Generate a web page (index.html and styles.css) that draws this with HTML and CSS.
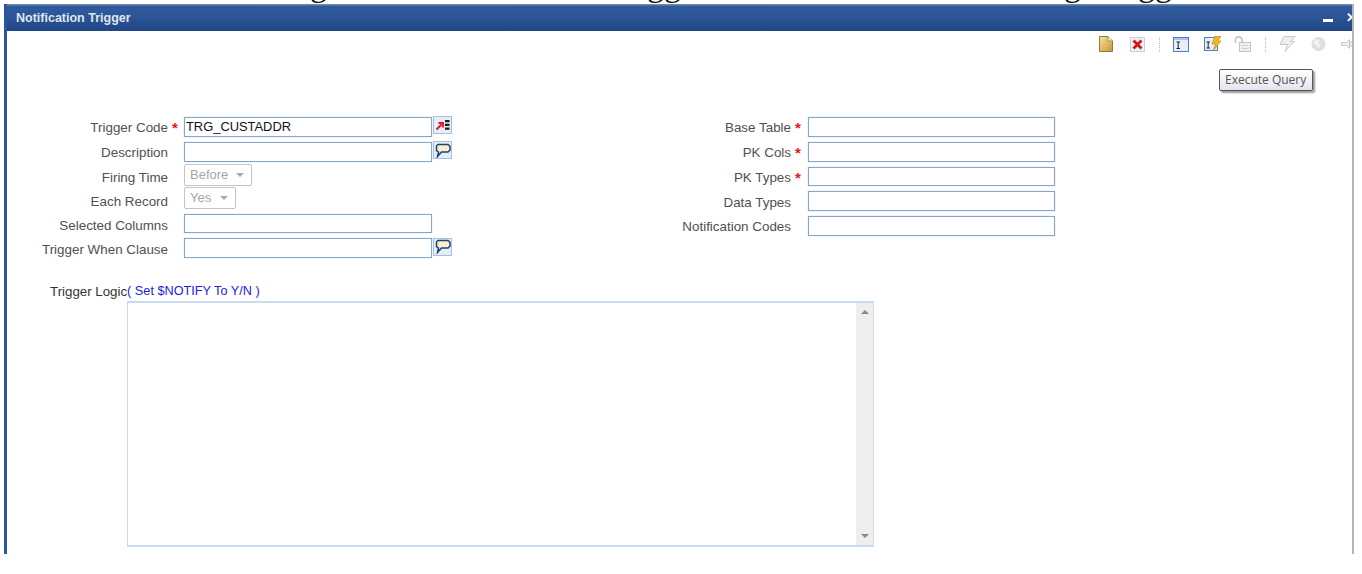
FILE: index.html
```html
<!DOCTYPE html>
<html lang="en">
<head>
<meta charset="utf-8">
<title>Notification Trigger</title>
<link rel="stylesheet" href="styles.css">
</head>
<body>
<div class="cutoff"><span class="g1">g</span><span class="g2">gg</span><span class="g3">g</span><span class="g4">gg</span></div>
<div class="window">
  <header class="titlebar">
    <h1 class="title">Notification Trigger</h1>
    <div class="winbtns"><span class="minimize"></span><span class="close">✕</span></div>
  </header>
  <div class="toolbar">
    <svg width="14" height="16" viewBox="0 0 14 16"><defs><linearGradient id="dg" x1="0" y1="0" x2="1" y2="1"><stop offset="0" stop-color="#f7e49a"/><stop offset="1" stop-color="#c9962e"/></linearGradient></defs><path d="M.5.5H9L13.5 5v10.500H.5z" fill="url(#dg)" stroke="#8f7a45"/><path d="M9 .5V5h4.500" fill="#fff6cf" stroke="#a98f50"/></svg>
    <svg width="15" height="15" viewBox="0 0 15 15"><rect x=".5" y=".5" width="14" height="14" fill="#eef2f8" stroke="#c6d0de"/><path d="M3.500 3.500l8 8M11.500 3.500l-8 8" stroke="#d3141c" stroke-width="2.800"/></svg>
    <span class="sep"></span>
    <svg width="16" height="15" viewBox="0 0 16 15"><rect x=".5" y=".5" width="15" height="14" fill="#e6eef9" stroke="#4d80bd"/><rect x="1" y="1" width="14" height="2" fill="#a9c6e8"/><path d="M3.500 5H7M3.500 11.500H7M5.200 5v6.500" stroke="#222" fill="none"/></svg>
    <svg width="18" height="16" viewBox="0 0 18 16"><rect x=".5" y="1.500" width="13" height="13" fill="#e6eef9" stroke="#4d80bd"/><path d="M2.500 6H6M2.500 12H6M4.200 6v6" stroke="#222" fill="none"/><path d="M11 0h6l-3 5h3l-8 10 2.500-7H8z" fill="#f4b71f" stroke="#b9820c" stroke-width=".6"/></svg>
    <svg width="18" height="16" viewBox="0 0 18 16"><path d="M1.500 7V4a3.200 3.200 0 0 1 6.400 0v2" fill="none" stroke="#c3c7cc" stroke-width="1.700"/><rect x="5.500" y="6.500" width="11" height="9" fill="#eef0f2" stroke="#c0c4c9"/><path d="M7.500 9.500h7M7.500 12.500h7" stroke="#ccd0d4"/></svg>
    <span class="sep"></span>
    <svg width="17" height="16" viewBox="0 0 17 16"><path d="M5 .5h11.500l-5 5h4L6 15.500l2.500-7H1z" fill="#eceeef" stroke="#c8cbce"/></svg>
    <svg width="15" height="16" viewBox="0 0 15 16"><circle cx="7.500" cy="8" r="7" fill="#dcdfe1"/><path d="M4 3l5 1-2 3 3 2-3 4-2-4-3-1z" fill="#f2f3f4"/></svg>
    <svg width="14" height="16" viewBox="0 0 14 16"><path d="M.5 6.500h5l3-3v9l-3-3h-5zM9 6h5v4H9z" fill="#eceeef" stroke="#c8cbce"/></svg>
  </div>
  <div class="tooltip">Execute Query</div>
  <form class="form">
    <div class="col col-left">
      <div class="row"><label class="lbl">Trigger Code</label><span class="req">*</span><div class="input val">TRG_CUSTADDR</div>
        <button type="button" class="iconbtn"><svg width="15" height="13" viewBox="0 0 15 13"><path d="M1.500 10.500L6.500 5.500M3.500 4H8v4.500" fill="none" stroke="#e0101c" stroke-width="1.800"/><path d="M10 1h4.500v2.200H10zM10 4.800h4.500V7H10zM10 8.600h4.500v2.200H10z" fill="#1b1b1b"/></svg></button></div>
      <div class="row"><label class="lbl">Description</label><span class="req"></span><div class="input"></div>
        <button type="button" class="iconbtn"><svg width="16" height="15" viewBox="0 0 16 15"><path d="M3 1.500h10L15 3.500v3.500L13 9H6.500L2.500 13.500 3.500 9 1.500 7.500V3z" fill="#fdf0c4" stroke="#1d3f86" stroke-width="1.500"/></svg></button></div>
      <div class="row row-sel"><label class="lbl lbl-sel">Firing Time</label><span class="req"></span><div class="select sel-wide"><span>Before</span><i class="caret"></i></div></div>
      <div class="row row-sel2"><label class="lbl lbl-sel2">Each Record</label><span class="req"></span><div class="select sel-narrow"><span>Yes</span><i class="caret"></i></div></div>
      <div class="row row-after"><label class="lbl lbl-low">Selected Columns</label><span class="req"></span><div class="input"></div></div>
      <div class="row"><label class="lbl">Trigger When Clause</label><span class="req"></span><div class="input"></div>
        <button type="button" class="iconbtn"><svg width="16" height="15" viewBox="0 0 16 15"><path d="M3 1.500h10L15 3.500v3.500L13 9H6.500L2.500 13.500 3.500 9 1.500 7.500V3z" fill="#fdf0c4" stroke="#1d3f86" stroke-width="1.500"/></svg></button></div>
    </div>
    <div class="col col-right">
      <div class="row"><label class="lbl">Base Table</label><span class="req">*</span><div class="input"></div></div>
      <div class="row"><label class="lbl">PK Cols</label><span class="req">*</span><div class="input"></div></div>
      <div class="row"><label class="lbl">PK Types</label><span class="req">*</span><div class="input"></div></div>
      <div class="row"><label class="lbl">Data Types</label><span class="req"></span><div class="input"></div></div>
      <div class="row"><label class="lbl">Notification Codes</label><span class="req"></span><div class="input"></div></div>
    </div>
  </form>
  <p class="logic-label"><span class="logic-name">Trigger Logic</span><span class="logic-hint">( Set $NOTIFY To Y/N )</span></p>
  <div class="textarea">
    <div class="scrollbar"><i class="arrow-up"></i><i class="arrow-down"></i></div>
  </div>
</div>
</body>
</html>
```
FILE: styles.css
```css
* { box-sizing: border-box; }
html, body { margin: 0; padding: 0; background: #fff; overflow: hidden; }
body { width: 1362px; height: 574px; font-family: "Liberation Sans", Arial, sans-serif; }

.cutoff { display: flex; height: 4px; overflow: hidden; font-family: "Liberation Serif", serif; font-size: 34px; line-height: 34px; color: #111; }
.cutoff span { display: block; margin-top: -32px; white-space: nowrap; }
.g1 { margin-left: 310px; }
.g2 { margin-left: 320px; }
.g3 { margin-left: 383px; }
.g4 { margin-left: 57px; }

.window { position: relative; margin-left: 4px; width: 1350px; height: 550px; border-left: 3px solid #2c5796; border-right: 2px solid #b4b4b4; overflow: hidden; }

.titlebar { display: flex; align-items: center; justify-content: space-between; height: 27px; background: linear-gradient(#6f88ab 0, #6f88ab 1px, #305c9f 2px, #2b5494 14px, #1f4585 100%); padding-left: 9px; }
.title { margin: 0; font-size: 12.500px; font-weight: bold; color: #dfe6f1; }
.winbtns { display: flex; align-items: center; width: 29px; gap: 13px; height: 100%; overflow: hidden; }
.minimize { display: block; flex: none; width: 10px; height: 3px; margin-top: 6px; background: #fff; }
.close { flex: none; font-size: 13px; font-weight: bold; color: #fff; }

.toolbar { display: grid; grid-template-columns: 31px 29px 14px 31px 30px 31px 14px 32px 30px 11px; justify-content: end; align-items: center; height: 24px; padding-top: 2px; overflow: hidden; }
.toolbar svg { display: block; }
.sep { display: block; width: 1px; height: 15px; border-left: 1px dotted #b9b9b9; }

.tooltip { position: absolute; left: 1212px; top: 65px; width: 94px; height: 22px; padding-left: 5px; border: 1px solid #555; border-radius: 2px; background: linear-gradient(#fff, #e3e4ef); box-shadow: 2px 2px 2px #999; font-family: "Open Sans", sans-serif; font-size: 12px; line-height: 19px; color: #555; white-space: nowrap; }

.form { display: flex; margin-top: 62px; padding-left: 9px; }
.col { display: flex; flex-direction: column; gap: 5px; }
.col-left { width: 632px; }
.row { display: flex; align-items: center; height: 19.750px; font-size: 13.400px; color: #505050; }
.row-sel { height: 22px; margin-top: -3px; }
.row-sel2 { height: 22px; margin-top: -4px; }
.row-after { margin-top: 0; }
.lbl { width: 152px; padding-top: 2px; text-align: right; white-space: nowrap; }
.lbl-sel { padding-top: 5px; }
.lbl-sel2 { padding-top: 7px; }
.lbl-low { padding-top: 4px; }
.req { width: 16px; padding: 3px 0 0 4px; font-size: 15px; line-height: 14px; font-weight: bold; color: #e8141c; }
.col-right .lbl { width: 143px; }
.col-right .req { width: 17px; }
.col-right .input { width: 247px; }

.input { width: 248px; height: 100%; padding: 0 1px; border: 1px solid #86a5ca; box-shadow: 0 0 1px #a9c0dc; background: #fff; font-size: 12.900px; line-height: 17px; color: #111; }
.val { white-space: nowrap; }
.iconbtn { display: flex; align-items: center; justify-content: center; width: 19px; height: 18px; margin: -3px 0 0 1px; padding: 0; border: 1px solid #a9c0dc; background: #e6edf7; }
.iconbtn svg { display: block; flex: none; }

.select { display: flex; align-items: center; justify-content: space-between; height: 100%; padding: 0 7px 0 5px; border: 1px solid #c4c4c4; border-radius: 2px; background: #fff; color: #a6a6a6; font-size: 13px; }
.sel-wide { width: 68px; }
.sel-narrow { width: 52px; }
.caret { display: block; width: 0; height: 0; border: 4px solid transparent; border-top: 4px solid #a8a8a8; border-bottom: 0; }

.logic-label { display: flex; margin: 25px 0 0 43px; height: 18px; font-size: 13.300px; line-height: 17px; white-space: nowrap; }
.logic-name { color: #333; }
.logic-hint { font-size: 12.700px; color: #2222dd; }

.textarea { display: flex; justify-content: flex-end; width: 747px; height: 246px; margin-left: 120px; border: 2px solid #c8dbf0; border-left-width: 1px; border-right-width: 1px; background: #fff; }
.scrollbar { position: relative; display: flex; flex-direction: column; justify-content: space-between; align-items: center; width: 17px; height: 100%; padding: 7px 0; background: #eeeeee; }
.arrow-up { display: block; width: 0; height: 0; border: 4px solid transparent; border-bottom: 4px solid #888; border-top: 0; }
.arrow-down { display: block; width: 0; height: 0; border: 4px solid transparent; border-top: 4px solid #888; border-bottom: 0; }
```
